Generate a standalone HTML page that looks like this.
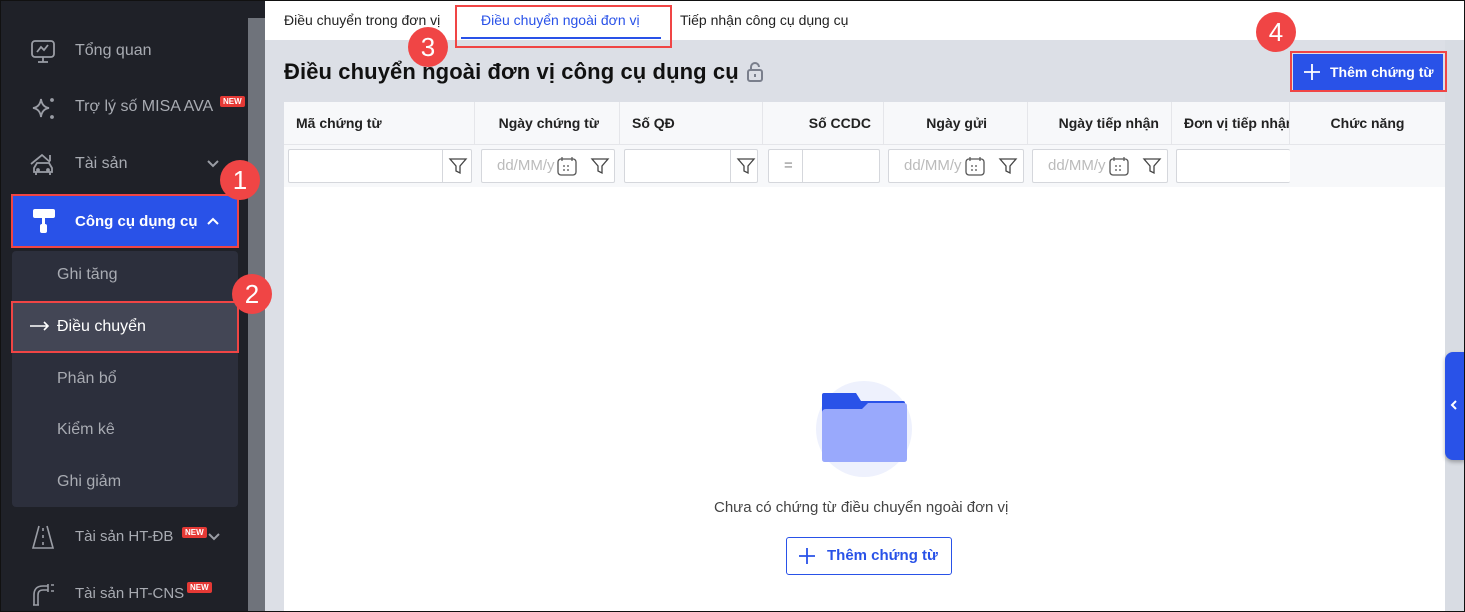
<!DOCTYPE html>
<html><head><meta charset="utf-8"><style>
*{box-sizing:border-box;margin:0;padding:0}
html,body{width:1465px;height:612px;overflow:hidden}
body{font-family:"Liberation Sans",sans-serif;background:#dcdfe6;position:relative}
.frame{position:absolute;inset:0;border:1px solid #111;z-index:50;pointer-events:none}
.side{position:absolute;left:0;top:0;width:248px;height:612px;background:#1f2128}
.scroll{position:absolute;left:248px;top:0;width:17px;height:612px;background:#6f737b}
.scroll:before{content:"";position:absolute;left:0;top:0;width:17px;height:18px;background:#1f2128}
.it{position:absolute;left:0;width:248px;height:50px;color:#a8abb2;font-size:16px;display:flex;align-items:center}
.it .ic{position:absolute;left:30px;top:13px;width:26px;height:26px}
.it .tx{position:absolute;left:75px}
.sub{position:absolute;left:12px;top:251px;width:226px;height:256px;background:#2c2f3c;border-radius:4px}
.si{position:absolute;left:57px;color:#a8abb2;font-size:16px}
.new{position:absolute;background:#e53935;color:#fff;font-size:8px;font-weight:bold;padding:1px 3px;border-radius:2px}
.badge{position:absolute;width:40px;height:40px;border-radius:50%;background:#f04545;color:#fff;font-size:26px;text-align:center;line-height:40px;z-index:20}
.red{position:absolute;border:2px solid #f04545;z-index:10}
.tabs{position:absolute;left:265px;top:0;width:1200px;height:40px;background:#fff}
.tab{position:absolute;top:12px;font-size:14px;color:#222}
.tbl{position:absolute;left:284px;top:102px;width:1161px;height:510px;background:#fff}
.hr{position:absolute;left:0;top:0;width:1161px;height:43px;border-bottom:1px solid #e5e6ea;background:#f7f8fa}
.hc{position:absolute;top:0;height:43px;border-right:1px solid #e5e6ea;font-size:14px;font-weight:bold;color:#222;line-height:43px;padding:0 12px}
.fr{position:absolute;left:0;top:43px;width:1161px;height:42px;background:#f7f8fa}
.inp{position:absolute;top:4px;height:34px;background:#fff;border:1px solid #d5d7dc;border-radius:2px;font-size:15px;color:#bbb;line-height:32px;padding-left:15px;overflow:hidden}
</style></head><body>
<div class="frame"></div>
<div class="side">
 <div class="it" style="top:26px"><svg class="ic" viewBox="0 0 26 26" fill="none" stroke="#9a9da5" stroke-width="1.8"><rect x="2" y="2" width="22" height="16" rx="3"/><path d="M7 13l4-5 3 3 4-5M13 18v5M8 23h10"/></svg><span class="tx">Tổng quan</span></div>
 <div class="it" style="top:82px"><svg class="ic" viewBox="0 0 26 26" fill="none" stroke="#9a9da5" stroke-width="1.8"><path d="M11 4q1 8 8 9q-7 1-8 9q-1-8-8-9q7-1 8-9z"/><circle cx="22" cy="5" r="1"/><circle cx="22" cy="22" r="1"/></svg><span class="tx">Trợ lý số MISA AVA</span><span class="new" style="left:220px;top:14px">NEW</span></div>
 <div class="it" style="top:139px"><svg class="ic" viewBox="0 0 26 26" fill="none" stroke="#9a9da5" stroke-width="1.8"><path d="M1 12L12 3l8 7M20 3v6M4 20v-4l3-5h12l3 5v4zM6 20v3M20 20v3"/><circle cx="8" cy="18" r="1"/><circle cx="18" cy="18" r="1"/></svg><span class="tx">Tài sản</span><svg style="position:absolute;left:206px;top:20px" width="14" height="10" viewBox="0 0 14 10" fill="none" stroke="#9a9da5" stroke-width="2"><path d="M2 2l5 5 5-5"/></svg></div>
 <div class="it" style="top:196px;left:12px;width:226px;background:#2952e8;color:#fff;font-weight:bold"><svg style="position:absolute;left:19px;top:12px" width="26" height="26" viewBox="0 0 26 26" fill="#fff"><rect x="2" y="1" width="22" height="9" rx="2"/><rect x="11" y="10" width="3" height="6"/><rect x="9" y="16" width="7" height="9" rx="2"/></svg><span style="position:absolute;left:63px;font-size:15px">Công cụ dụng cụ</span><svg style="position:absolute;left:194px;top:20px" width="14" height="10" viewBox="0 0 14 10" fill="none" stroke="#fff" stroke-width="2"><path d="M2 8l5-5 5 5"/></svg></div>
 <div class="sub"></div>
 <div class="si" style="top:266px">Ghi tăng</div>
 <div style="position:absolute;left:12px;top:303px;width:226px;height:48px;background:#434655"></div>
 <svg style="position:absolute;left:30px;top:321px" width="20" height="10" viewBox="0 0 20 10" fill="none" stroke="#fff" stroke-width="1.6"><path d="M0 5h18M14 1l4 4-4 4"/></svg>
 <div class="si" style="top:318px;color:#fff">Điều chuyển</div>
 <div class="si" style="top:370px">Phân bổ</div>
 <div class="si" style="top:421px">Kiểm kê</div>
 <div class="si" style="top:473px">Ghi giảm</div>
 <div class="it" style="top:511px"><svg class="ic" viewBox="0 0 26 26" fill="none" stroke="#9a9da5" stroke-width="1.6"><path d="M9 2L3 24h20L17 2M13 4v3M13 11v3M13 18v3"/></svg><span class="tx" style="font-size:15px">Tài sản HT-ĐB</span><span class="new" style="left:182px;top:16px">NEW</span><svg style="position:absolute;left:208px;top:22px" width="12" height="8" viewBox="0 0 12 8" fill="none" stroke="#9a9da5" stroke-width="2"><path d="M1 1l5 5 5-5"/></svg></div>
 <div class="it" style="top:568px"><svg class="ic" viewBox="0 0 26 26" fill="none" stroke="#9a9da5" stroke-width="1.6"><path d="M4 24V14q0-9 9-9h5M8 24V14q0-5 5-5h5M18 3v8M21 4h3M21 10h3M3 24h6"/></svg><span class="tx" style="font-size:15px">Tài sản HT-CNS</span><span class="new" style="left:187px;top:14px">NEW</span></div>
</div>
<div class="scroll"></div>
<div class="red" style="left:11px;top:194px;width:228px;height:54px"></div>
<div class="red" style="left:11px;top:301px;width:228px;height:52px"></div>
<div class="badge" style="left:220px;top:160px">1</div>
<div class="badge" style="left:232px;top:274px">2</div>

<div class="tabs"></div>
<div class="tab" style="left:284px">Điều chuyển trong đơn vị</div>
<div class="tab" style="left:481px;color:#2952e8">Điều chuyển ngoài đơn vị</div>
<div style="position:absolute;left:461px;top:37px;width:200px;height:2px;background:#2952e8"></div>
<div class="tab" style="left:680px">Tiếp nhận công cụ dụng cụ</div>
<div class="red" style="left:455px;top:5px;width:217px;height:43px"></div>
<div class="badge" style="left:408px;top:27px">3</div>

<div style="position:absolute;left:284px;top:59px;font-size:22px;font-weight:bold;color:#111;letter-spacing:0.1px">Điều chuyển ngoài đơn vị công cụ dụng cụ</div>
<svg style="position:absolute;left:746px;top:61px" width="18" height="22" viewBox="0 0 18 22" fill="none" stroke="#7a7f8c" stroke-width="2"><path d="M5 9V6a4 4 0 0 1 8 0"/><rect x="2" y="9" width="14" height="11" rx="2"/><path d="M9 13v3"/></svg>
<div style="position:absolute;left:1293px;top:54px;width:150px;height:36px;background:#2952e8;color:#fff;font-size:14px;font-weight:bold;line-height:36px;padding-left:37px">Thêm chứng từ</div>
<svg style="position:absolute;left:1303px;top:63px" width="18" height="18" viewBox="0 0 18 18" stroke="#fff" stroke-width="1.8"><path d="M9 1v16M1 9h16"/></svg>
<div class="red" style="left:1290px;top:51px;width:157px;height:41px"></div>
<div class="badge" style="left:1256px;top:12px">4</div>

<div class="tbl">
 <div class="hr">
  <div class="hc" style="left:0;width:191px">Mã chứng từ</div>
  <div class="hc" style="left:191px;width:145px;text-align:right;padding-right:20px">Ngày chứng từ</div>
  <div class="hc" style="left:336px;width:143px">Số QĐ</div>
  <div class="hc" style="left:479px;width:121px;text-align:right">Số CCDC</div>
  <div class="hc" style="left:600px;width:144px;text-align:right;padding-right:40px">Ngày gửi</div>
  <div class="hc" style="left:744px;width:144px;text-align:right">Ngày tiếp nhận</div>
  <div class="hc" style="left:888px;width:118px;white-space:nowrap;overflow:hidden;padding:0 0 0 12px">Đơn vị tiếp nhận</div>
  <div class="hc" style="left:1006px;width:155px;text-align:center;border:none">Chức năng</div>
 </div>
 <div class="fr">
  <div class="inp" style="left:4px;width:184px"></div><div style="position:absolute;left:158px;top:5px;width:1px;height:32px;background:#d5d7dc"></div>
  <div class="inp" style="left:197px;width:134px">dd/MM/y</div>
  <div class="inp" style="left:340px;width:134px"></div><div style="position:absolute;left:446px;top:5px;width:1px;height:32px;background:#d5d7dc"></div>
  <div class="inp" style="left:484px;width:112px;color:#888">=</div><div style="position:absolute;left:518px;top:5px;width:1px;height:32px;background:#d5d7dc"></div>
  <div class="inp" style="left:604px;width:136px">dd/MM/y</div>
  <div class="inp" style="left:748px;width:136px">dd/MM/y</div>
  <div class="inp" style="left:892px;width:114px;border-right:none"></div>
 </div>
</div>
<svg width="0" height="0" style="position:absolute"><defs><g id="f"><path d="M2 3h16l-6 7v7l-4-2v-5z" fill="none" stroke="#444" stroke-width="1.3"/></g><g id="c"><rect x="1" y="3" width="18" height="16" rx="3" fill="#fff" stroke="#555" stroke-width="1.3"/><path d="M5 1v4M15 1v4M6 10h2M10 10h2M6 14h2M10 14h2" stroke="#555" stroke-width="1.2"/></g></defs></svg>
<svg style="position:absolute;left:448px;top:156px" width="20" height="20"><use href="#f"/></svg>
<svg style="position:absolute;left:590px;top:156px" width="20" height="20"><use href="#f"/></svg>
<svg style="position:absolute;left:736px;top:156px" width="20" height="20"><use href="#f"/></svg>
<svg style="position:absolute;left:998px;top:156px" width="20" height="20"><use href="#f"/></svg>
<svg style="position:absolute;left:1142px;top:156px" width="20" height="20"><use href="#f"/></svg>
<svg style="position:absolute;left:557px;top:156px" width="20" height="20"><use href="#c"/></svg>
<svg style="position:absolute;left:965px;top:156px" width="20" height="20"><use href="#c"/></svg>
<svg style="position:absolute;left:1109px;top:156px" width="20" height="20"><use href="#c"/></svg>
<div style="position:absolute;left:1445px;top:40px;width:19px;height:572px;background:#d8dce3"></div>
<div style="position:absolute;left:1445px;top:352px;width:20px;height:108px;background:#2952e8;border-radius:8px 0 0 8px;box-shadow:0 2px 4px rgba(0,0,0,.3)"></div>
<svg style="position:absolute;left:1450px;top:399px" width="8" height="12" viewBox="0 0 8 12" fill="none" stroke="#fff" stroke-width="2"><path d="M6 2L2 6l4 4"/></svg>

<div style="position:absolute;left:816px;top:381px;width:96px;height:96px;border-radius:50%;background:#eef1fd"></div>
<svg style="position:absolute;left:822px;top:393px" width="85" height="70" viewBox="0 0 85 70"><path d="M0 2q0-2 2-2h32l5 8h42q2 0 2 2v20H0z" fill="#2952e8"/><path d="M0 20q0-4 4-4h36l6-6h36q3 0 3 3v53q0 3-3 3H3q-3 0-3-3z" fill="#99a9fc"/></svg>
<div style="position:absolute;left:714px;top:499px;font-size:15px;color:#444">Chưa có chứng từ điều chuyển ngoài đơn vị</div>
<div style="position:absolute;left:786px;top:537px;width:166px;height:38px;border:1px solid #2952e8;border-radius:3px;color:#2952e8;font-size:15px;font-weight:bold;line-height:36px;padding-left:40px">Thêm chứng từ</div>
<svg style="position:absolute;left:798px;top:547px" width="18" height="18" viewBox="0 0 18 18" stroke="#2952e8" stroke-width="1.8"><path d="M9 1v16M1 9h16"/></svg>
</body></html>
